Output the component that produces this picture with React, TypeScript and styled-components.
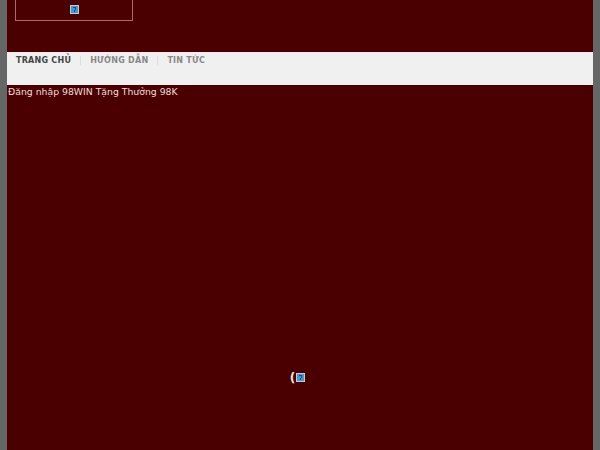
import styled, { createGlobalStyle } from "styled-components";

const GlobalStyle = createGlobalStyle`
  html, body {
    margin: 0;
    padding: 0;
    height: 450px;
    overflow: hidden;
    background-color: #666;
    font-family: "DejaVu Sans", sans-serif;
  }
`;

const Page = styled.div`
  width: 586px;
  height: 450px;
  margin: 0 7px;
  background-color: #4a0000;
  display: flex;
  flex-direction: column;
  overflow: hidden;
`;

const Header = styled.header`
  height: 52px;
  padding: 0 8px;
  box-sizing: border-box;
`;

const LogoBox = styled.a`
  width: 118px;
  height: 21px;
  box-sizing: border-box;
  border: 1px solid #a86a6a;
  border-top: none;
  display: flex;
  justify-content: center;
  padding-top: 5px;
`;

const Nav = styled.nav`
  height: 33px;
  background-color: #f0f0f0;
  border-top: 1px solid #ffe6e6;
  box-sizing: border-box;
`;

const NavList = styled.ul`
  list-style: none;
  margin: 0;
  padding: 3px 0 0 9px;
  display: flex;
`;

const NavItem = styled.li<{ $active?: boolean; $divider?: boolean }>`
  font-size: 8px;
  line-height: 9px;
  font-weight: bold;
  letter-spacing: 0.25px;
  color: ${({ $active }) => ($active ? "#444" : "#888")};
  padding: 0 9px;
  border-right: ${({ $divider }) => ($divider ? "1px solid #ddd" : "none")};

  &:first-child {
    padding-left: 0;
  }
`;

const Title = styled.h1`
  margin: 0;
  padding-left: 1px;
  font-size: 9.3px;
  font-weight: normal;
  line-height: 13px;
  color: #f0dcdc;
`;

const Center = styled.div`
  flex: 1;
  display: flex;
  justify-content: center;
  align-items: flex-start;
  padding-top: 275px;
  padding-right: 5px;
`;

const Paren = styled.span`
  font-size: 12px;
  line-height: 11px;
  color: #f4e4e4;
  font-weight: bold;
  margin-right: 1px;
`;

const BrokenImage = () => (
  <svg width="9" height="9" viewBox="0 0 9 9">
    <rect x="0.5" y="0.5" width="8" height="8" fill="#4f93c8" stroke="#b4cfe2" />
    <rect x="3" y="2" width="3" height="1" fill="#1f4f80" />
    <rect x="5" y="3" width="1" height="2" fill="#1f4f80" />
    <rect x="4" y="5" width="1" height="2" fill="#1f4f80" />
  </svg>
);

const App = () => {
  return (
    <>
      <GlobalStyle />
      <Page>
        <Header>
          <LogoBox>
            <BrokenImage />
          </LogoBox>
        </Header>
        <Nav>
          <NavList>
            <NavItem $active $divider>TRANG CHỦ</NavItem>
            <NavItem $divider>HƯỚNG DẪN</NavItem>
            <NavItem>TIN TỨC</NavItem>
          </NavList>
        </Nav>
        <Title>Đăng nhập 98WIN Tặng Thưởng 98K</Title>
        <Center>
          <Paren>(</Paren>
          <BrokenImage />
        </Center>
      </Page>
    </>
  );
};

export default App;
